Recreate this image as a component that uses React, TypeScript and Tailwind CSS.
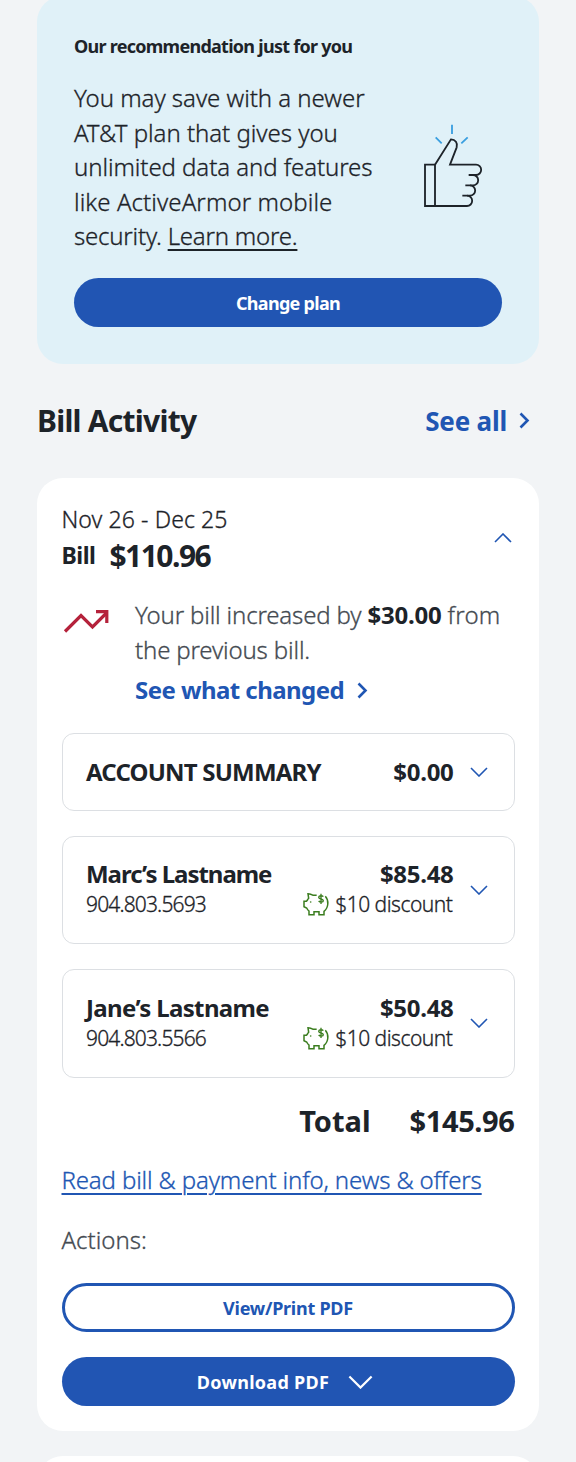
import clsx from 'clsx';
import React, { useState } from 'react';

interface Line {
  name: string;
  phone?: string;
  amount: string;
  discount?: string;
  nameClass: string;
}

const lines: Line[] = [
  {
    name: 'ACCOUNT SUMMARY',
    amount: '$0.00',
    nameClass: 'tracking-[-0.8px]',
  },
  {
    name: 'Marc’s Lastname',
    phone: '904.803.5693',
    amount: '$85.48',
    discount: '$10 discount',
    nameClass: 'tracking-[-1.03px]',
  },
  {
    name: 'Jane’s Lastname',
    phone: '904.803.5566',
    amount: '$50.48',
    discount: '$10 discount',
    nameClass: 'tracking-[-0.65px]',
  },
];

function ThumbsUp() {
  return (
    <svg
      className="mt-[41px] h-[87px] w-[62px] shrink-0"
      viewBox="66 36 186 261"
      fill="none"
      stroke="#1d2329"
      strokeWidth="5.5"
    >
      <path d="M105 288V164H75V288H201A15.5 15.5 0 0 0 201 257H187" />
      <path d="M201 257H210A15.5 15.5 0 0 0 210 226H196" />
      <path d="M210 226H219A15.5 15.5 0 0 0 219 195H206" />
      <path d="M219 195H228A15.5 15.5 0 0 0 228 164H150L170 112C174 99 166 88 153 88L105 164" />
      <path stroke="#3a9fe0" d="M156 44V72M107 82L125 100M203 82L184 100" />
    </svg>
  );
}

function TrendUp() {
  return (
    <svg
      className="mt-3 h-[24px] w-[46px] shrink-0"
      viewBox="0 0 46 24"
      fill="none"
      stroke="#b5223b"
      strokeWidth="3.2"
    >
      <path d="M2 22.5L18 6.5L29.5 18L43.5 4" />
      <path d="M33 2.6H43.8V14" />
    </svg>
  );
}

function PiggyBank() {
  return (
    <svg
      className="h-6 w-[27px] shrink-0"
      viewBox="0 0 81 72"
      fill="none"
      stroke="#3b7d1f"
      strokeWidth="4.5"
    >
      <path d="M44 10H34C29 7 24 5 18 5L20 19C17 22 15 27 13 28H6V44L14 48C16 52 18 55 21 57V68H36V59H51V68H66V58C80 47 81 25 70 13" />
      <path strokeWidth="4" d="M64 14C61 10 50 10 50 16C50 23 64 19 64 26C64 32 53 31 50 27M57 5V36" />
      <circle cx="26" cy="30" r="2.5" fill="#3b7d1f" stroke="none" />
    </svg>
  );
}

function Chevron({ className }: { className?: string }) {
  return (
    <svg
      className={clsx('shrink-0', className)}
      viewBox="0 0 18 10"
      fill="none"
      stroke="currentColor"
      strokeWidth="1.6"
    >
      <path d="M1 1L9 9L17 1" />
    </svg>
  );
}

function RightChevron({ className }: { className?: string }) {
  return (
    <svg
      className={clsx('h-[17px] w-[11px] shrink-0', className)}
      viewBox="0 0 11 17"
      fill="none"
      stroke="currentColor"
      strokeWidth="2.6"
    >
      <path d="M1.5 1.5L8.5 8.5L1.5 15.5" />
    </svg>
  );
}

function BillLine({ name, phone, amount, discount, nameClass }: Line) {
  return (
    <div
      className={clsx(
        'flex items-center rounded-xl border-[1.5px] border-[#dcdfe3] pr-[26px] pl-[23.5px]',
        phone ? 'h-[108.5px]' : 'h-[78px] pt-px',
      )}
    >
      <div className={clsx('flex-1', phone && '-mt-0.5')}>
        <div className={clsx('text-2xl leading-[30px] font-bold', nameClass)}>{name}</div>
        {phone && (
          <div className="mt-px text-[21px] leading-7 font-light tracking-[-0.85px] [-webkit-text-stroke:0.3px]">
            {phone}
          </div>
        )}
      </div>
      <div className={clsx('flex flex-col items-end', phone && '-mt-0.5')}>
        <div className="text-2xl leading-[30px] font-bold tracking-[-0.3px]">{amount}</div>
        {discount && (
          <div className="mt-px mr-px flex items-center gap-[6px]">
            <PiggyBank />
            <span className="text-[21px] leading-7 font-light tracking-[-0.5px] [-webkit-text-stroke:0.3px]">
              {discount}
            </span>
          </div>
        )}
      </div>
      <Chevron className="ml-4 h-[10px] w-[18px] text-[#2056b3]" />
    </div>
  );
}

export default function App() {
  const [isOpen, setIsOpen] = useState(true);

  return (
    <div className="h-[1462px] w-[576px] overflow-hidden bg-[#f2f4f6] px-[37px] font-['Noto_Sans','Open_Sans',sans-serif] text-[#1d2329]">
      <section className="-mt-1 h-[367.5px] rounded-[26px] bg-[#e0f1f8] px-[37px] pt-[38px]">
        <h3 className="text-lg leading-6 font-bold tracking-[-0.73px] whitespace-nowrap">
          Our recommendation just for you
        </h3>
        <div className="mt-[23px] flex">
          <p className="w-[348px] text-2xl leading-[34.6px] font-light tracking-[-0.04px] [-webkit-text-stroke:0.3px]">
            You may save with a newer
            <br />
            AT&amp;T plan that gives you
            <br />
            <span className="tracking-[-0.08px]">unlimited data and features</span>
            <br />
            <span className="tracking-[0.08px]">like ActiveArmor mobile</span>
            <br />
            <span className="tracking-[-0.22px]">
              security.{' '}
              <a className="underline decoration-[1.5px] underline-offset-4">Learn more.</a>
            </span>
          </p>
          <ThumbsUp />
        </div>
        <button className="mt-6 h-[49px] w-full rounded-full bg-[#2155b3] pt-px text-lg font-bold tracking-[-0.7px] text-white">
          Change plan
        </button>
      </section>

      <div className="mt-[37px] flex h-10 items-center justify-between pr-[9px]">
        <h2 className="text-[30px] leading-10 font-bold tracking-[-0.75px]">Bill Activity</h2>
        <a className="flex items-center text-[26px] leading-10 font-bold tracking-[-0.2px] text-[#2056b3]">
          See all
          <RightChevron className="ml-3" />
        </a>
      </div>

      <section className="mt-[37px] h-[953px] rounded-[26px] bg-white pt-[26px] pr-[24.5px] pl-[24.5px]">
        <div className="flex items-center justify-between">
          <div>
            <div className="text-[23px] leading-[30px] font-light tracking-[0.1px] [-webkit-text-stroke:0.3px]">
              Nov 26 - Dec 25
            </div>
            <div className="mt-[2px] flex gap-[14px] leading-10 font-bold">
              <span className="text-[23px] leading-[39px] tracking-[-0.5px]">Bill</span>
              <span className="text-[30px] tracking-[-1.5px]">$110.96</span>
            </div>
          </div>
          <button aria-label="Toggle bill" onClick={() => setIsOpen(!isOpen)}>
            <Chevron
              className={clsx(
                'mr-[2.5px] mb-[3px] h-[10px] w-[18px] text-[#2056b3]',
                isOpen && 'rotate-180',
              )}
            />
          </button>
        </div>

        {isOpen && (
          <>
            <div className="mt-[21.5px] flex pl-[1.5px]">
              <TrendUp />
              <div className="ml-[26px] text-2xl whitespace-nowrap">
                <p className="leading-[35px] font-light tracking-[-0.16px] text-[#454b52] [-webkit-text-stroke:0.3px]">
                  Your bill increased by{' '}
                  <b className="font-bold tracking-[-0.23px] text-[#1d2329] [-webkit-text-stroke:0]">
                    $30.00
                  </b>{' '}
                  <span className="tracking-[0.2px]">from</span>
                  <br />
                  the previous bill.
                </p>
                <a className="mt-[6px] flex items-center leading-[34px] font-bold tracking-[-0.55px] text-[#2056b3]">
                  See what changed
                  <RightChevron className="ml-[13px]" />
                </a>
              </div>
            </div>
            <div className="mt-[25.5px] flex flex-col gap-[25px]">
              {lines.map((line) => (
                <BillLine key={line.name} {...line} />
              ))}
            </div>
            <div className="mt-[23px] flex justify-end gap-[39px] text-[29px] leading-10 font-bold">
              <span>Total</span>
              <span className="tracking-[-0.4px]">$145.96</span>
            </div>
          </>
        )}

        <a className="mt-[22px] block text-2xl leading-[34px] font-light tracking-[-0.14px] whitespace-nowrap text-[#2056b3] underline decoration-[1.5px] underline-offset-4 [-webkit-text-stroke:0.3px]">
          Read bill &amp; payment info, news &amp; offers
        </a>
        <div className="mt-[26px] text-2xl leading-[34px] font-light text-[#454b52] [-webkit-text-stroke:0.3px]">
          Actions:
        </div>
        <button className="mt-[26px] h-[49px] w-full rounded-full border-[3px] border-[#2056b3] pt-px text-lg font-bold tracking-[-0.25px] text-[#2056b3]">
          View/Print PDF
        </button>
        <button className="mt-[25px] flex h-[49px] w-full items-center justify-center rounded-full bg-[#2155b3] pt-px pr-[6px] text-lg font-bold tracking-[0.3px] text-white">
          Download PDF
          <Chevron className="ml-[19px] h-[14px] w-[25px]" />
        </button>
      </section>

      <section className="mt-[25px] h-20 rounded-[26px] bg-white" />
    </div>
  );
}
